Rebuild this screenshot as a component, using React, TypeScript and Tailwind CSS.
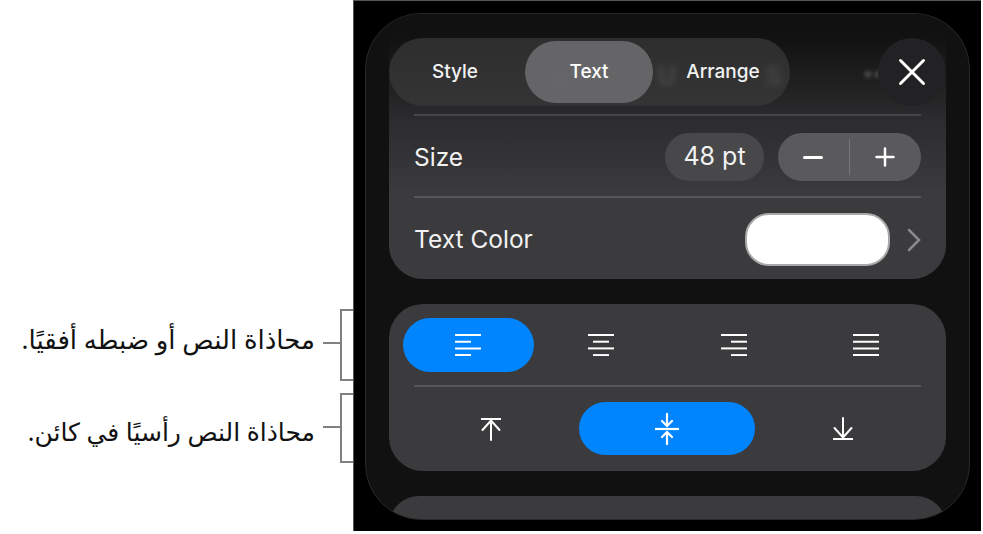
import React from "react";

const uiFont = { fontFamily: "Inter, 'Liberation Sans', sans-serif" };

const Divider = ({ dim }: { dim?: boolean }) => <div className={dim ? "h-[2px] bg-[#464648]" : "h-[2px] bg-[#565658]"} />;

const AlignIcon = ({ rows }: { rows: [number, number][] }) => (
  <svg width="26" height="22" viewBox="0 0 26 22" fill="none" stroke="#fff" strokeWidth="2">
    {rows.map(([x1, x2], i) => (
      <line key={i} x1={x1} x2={x2} y1={1 + i * 6.7} y2={1 + i * 6.7} />
    ))}
  </svg>
);

const ArrowTop = () => (
  <svg width="22" height="24" viewBox="0 0 22 24" fill="none" stroke="#fff" strokeWidth="2" strokeLinecap="round">
    <path d="M1 2h20" strokeLinecap="butt" />
    <path d="M11 3v20M2.5 13L11 3.5l8.500 9.500" />
  </svg>
);

const ArrowBottom = () => (
  <svg width="22" height="24" viewBox="0 0 22 24" fill="none" stroke="#fff" strokeWidth="2" strokeLinecap="round">
    <path d="M1 22h20" strokeLinecap="butt" />
    <path d="M11 1v20M2.500 11L11 20.500l8.500-9.500" />
  </svg>
);

const ArrowsCenter = () => (
  <svg width="24" height="32" viewBox="0 0 24 32" fill="none" stroke="#fff" strokeWidth="2.200" strokeLinecap="round">
    <path d="M0 16h24" strokeLinecap="butt" />
    <path d="M12 1v11M7 8l5 5 5-5M12 31V20M7 24l5-5 5 5" />
  </svg>
);

const Annotation = ({ text, height, textClass, lineClass }: { text: string; height: string; textClass: string; lineClass: string }) => (
  <div className={`flex items-center justify-end ${height}`}>
    <p
      dir="rtl"
      className={`mr-2 leading-[32px] text-[#111] whitespace-nowrap ${textClass}`}
      style={{ fontFamily: "'Noto Sans', 'DejaVu Sans', sans-serif" }}
    >
      {text}
    </p>
    <div className={`w-[17px] h-[2px] bg-[#808080] ${lineClass}`} />
    <div className="w-[13px] self-stretch border-2 border-r-0 border-[#808080]" />
  </div>
);

export default function App() {
  return (
    <div className="w-[983px] h-[534px] bg-white flex overflow-hidden" style={uiFont}>
      <div className="w-[353px] pt-[309px] flex flex-col gap-[12px]">
        <Annotation text="محاذاة النص أو ضبطه أفقيًا." height="h-[72px]" textClass="text-[26px] mb-[12px]" lineClass="mb-[4px]" />
        <Annotation text="محاذاة النص رأسيًا في كائن." height="h-[70px]" textClass="text-[25px] mt-[6px]" lineClass="mb-[2px]" />
      </div>

      <div className="w-[628px] h-[531px] bg-black border-t border-l border-[#555] pl-[11px] pt-[12px]">
        <div className="w-[605px] h-[507px] rounded-[56px] border border-[#282828] bg-[#111] overflow-hidden px-[23px]">
          {/* first card fades out under the toolbar */}
          <div className="relative h-[265px] rounded-b-[34px] bg-gradient-to-b from-[#111] from-[8%] via-[#2c2c2e] via-[40%] to-[#3b3b3d] to-[68%] pt-[24px]">
            <span className="absolute left-[166px] top-[42px] text-[26px] font-semibold text-[#8a8a8c] blur-[3px]">ı</span>
            <span className="absolute left-[268px] top-[42px] text-[26px] font-semibold text-[#777] blur-[3px]">U</span>
            <span className="absolute left-[376px] top-[42px] text-[26px] font-semibold text-[#666] blur-[3px]">S</span>
            <span className="absolute left-[474px] top-[44px] text-[20px] font-semibold text-[#555] blur-[2px]">••</span>

            <div className="relative flex items-start justify-between">
              <div className="w-[401px] h-[68px] rounded-[34px] bg-[#3a3a3c]/70 flex items-center gap-[6px] pl-[2px]">
                <div className="w-[128px] pt-[1px] text-center text-[19px] font-medium text-[#f2f2f2]">Style</div>
                <div className="w-[128px] h-[62px] pt-[1px] rounded-[31px] bg-[#68686c]/95 flex items-center justify-center text-[19px] font-medium text-white">
                  Text
                </div>
                <div className="w-[128px] pt-[1px] text-center text-[19px] font-medium text-[#f2f2f2]">Arrange</div>
              </div>
              <button className="w-[68px] h-[68px] rounded-full bg-[#222224] flex items-center justify-center">
                <svg width="28" height="28" viewBox="0 0 28 28" fill="none" stroke="#fff" strokeWidth="3" strokeLinecap="round">
                  <path d="M2.500 2.500l23 23M25.500 2.500l-23 23" />
                </svg>
              </button>
            </div>

            <div className="px-[25px] mt-[8px]">
              <Divider dim />
              <div className="h-[80px] pt-[2px] flex items-center justify-between">
                <span className="text-[24.500px] text-[#f2f2f2]">Size</span>
                <div className="flex items-center gap-[14px]">
                  <div className="w-[99px] h-[48px] rounded-[24px] bg-[#48484a] flex items-center justify-center text-[25px] text-[#f2f2f2]">
                    48 pt
                  </div>
                  <div className="w-[143px] h-[48px] rounded-[24px] bg-[#5a5a5c] flex items-center">
                    <div className="w-[71px] pr-[2px] flex justify-center">
                      <div className="w-[20px] h-[3px] bg-white rounded-full" />
                    </div>
                    <div className="w-[1px] h-[36px] bg-[#767678]" />
                    <div className="flex-1 pr-[2px] flex justify-center">
                      <svg width="20" height="20" viewBox="0 0 20 20" stroke="#fff" strokeWidth="2.500" strokeLinecap="round">
                        <path d="M1.500 10h17M10 1.500v17" />
                      </svg>
                    </div>
                  </div>
                </div>
              </div>
              <Divider />
              <div className="h-[83px] flex items-center justify-between">
                <span className="text-[24.500px] text-[#f2f2f2]">Text Color</span>
                <div className="flex items-center gap-[17px]">
                  <div className="w-[145px] h-[53px] rounded-[24px] bg-white border-2 border-[#a8a8a8]" />
                  <svg width="14" height="24" viewBox="0 0 14 24" fill="none" stroke="#8a8a8c" strokeWidth="2.500" strokeLinecap="round">
                    <path d="M2 2l10 10L2 22" />
                  </svg>
                </div>
              </div>
            </div>
          </div>

          <div className="mt-[25px] h-[167px] rounded-[34px] bg-[#3b3b3d] px-[14px] pt-[14px]">
            <div className="grid grid-cols-4 h-[54px]">
              <div className="rounded-[27px] bg-[#0085ff] flex items-center justify-center mr-[1px] pr-[1px]">
                <AlignIcon rows={[[0, 26], [0, 16], [0, 26], [0, 16]]} />
              </div>
              <div className="flex items-center justify-center pr-[1px]">
                <AlignIcon rows={[[0, 26], [5, 21], [0, 26], [5, 21]]} />
              </div>
              <div className="flex items-center justify-center">
                <AlignIcon rows={[[0, 26], [10, 26], [0, 26], [10, 26]]} />
              </div>
              <div className="flex items-center justify-center">
                <AlignIcon rows={[[0, 26], [0, 26], [0, 26], [0, 26]]} />
              </div>
            </div>
            <div className="h-[2px] bg-[#565658] mx-[11px] mt-[13px]" />
            <div className="grid grid-cols-3 h-[53px] mt-[15px]">
              <div className="flex items-center justify-center">
                <ArrowTop />
              </div>
              <div className="rounded-[27px] bg-[#0085ff] flex items-center justify-center mr-[1px]">
                <ArrowsCenter />
              </div>
              <div className="flex items-center justify-center pr-[1px]">
                <ArrowBottom />
              </div>
            </div>
          </div>

          <div className="mt-[25px] h-[60px] rounded-[34px] bg-[#3b3b3d]" />
        </div>
      </div>
    </div>
  );
}
